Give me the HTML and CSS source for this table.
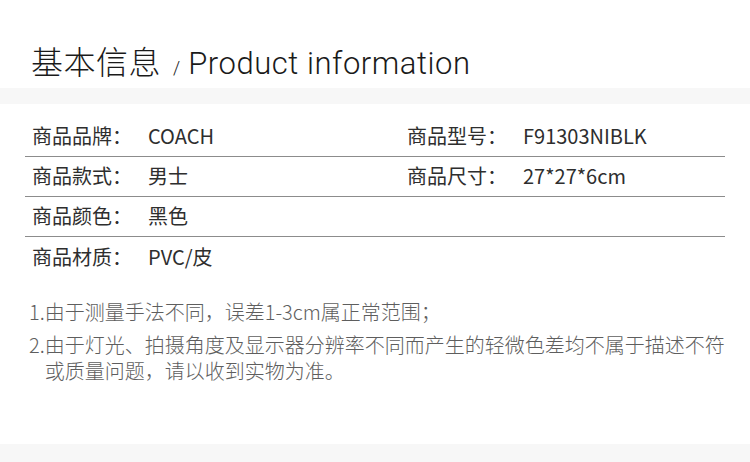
FILE: index.html
```html
<!DOCTYPE html>
<html lang="zh-CN">
<head>
<meta charset="utf-8">
<title>基本信息</title>
<link rel="stylesheet" href="styles.css">
</head>
<body>
<div class="page">
  <header class="header">
    <h1 class="title"><span class="title-cn">基本信息</span><span class="title-sep">/</span><span class="title-en">Product information</span></h1>
  </header>
  <div class="band"></div>
  <section class="specs">
    <div class="row">
      <div class="cell"><span class="label">商品品牌：</span><span class="value">COACH</span></div>
      <div class="cell"><span class="label">商品型号：</span><span class="value">F91303NIBLK</span></div>
    </div>
    <div class="row">
      <div class="cell"><span class="label">商品款式：</span><span class="value">男士</span></div>
      <div class="cell"><span class="label">商品尺寸：</span><span class="value">27*27*6cm</span></div>
    </div>
    <div class="row">
      <div class="cell"><span class="label">商品颜色：</span><span class="value">黑色</span></div>
      <div class="cell"></div>
    </div>
    <div class="row row-last">
      <div class="cell"><span class="label">商品材质：</span><span class="value">PVC/皮</span></div>
      <div class="cell"></div>
    </div>
  </section>
  <section class="notes">
    <p class="note"><span class="num">1.</span><span class="text">由于测量手法不同，误差1-3cm属正常范围；</span></p>
    <p class="note"><span class="num">2.</span><span class="text">由于灯光、拍摄角度及显示器分辨率不同而产生的轻微色差均不属于描述不符或质量问题，请以收到实物为准。</span></p>
  </section>
  <div class="band band-bottom"></div>
</div>
</body>
</html>
```

FILE: styles.css
```css
* {
  box-sizing: border-box;
}

html, body {
  margin: 0;
  padding: 0;
  background: #ffffff;
}

body {
  font-family: "Noto Sans CJK SC", "Noto Sans", sans-serif;
  color: #333333;
}

.page {
  width: 750px;
  min-height: 462px;
  display: flex;
  flex-direction: column;
}

.header {
  height: 88px;
  padding: 40px 0 0 31px;
}

.title {
  margin: 0;
  font-weight: 300;
  line-height: 40px;
  color: #1a1a1a;
  display: flex;
  align-items: baseline;
}

.title-cn {
  font-family: "Noto Sans CJK SC", sans-serif;
  font-size: 32px;
  font-weight: 300;
  letter-spacing: 0.5px;
}

.title-sep {
  font-family: "Roboto", sans-serif;
  font-size: 18px;
  font-weight: 300;
  margin: 0 8px 0 12px;
}

.title-en {
  font-family: "Roboto", sans-serif;
  font-size: 31px;
  font-weight: 300;
  letter-spacing: 0.55px;
}

.band {
  height: 16px;
  background: #f7f7f7;
}

.specs {
  margin: 13px 25px 0;
}

.row {
  display: grid;
  grid-template-columns: 375px 1fr;
  height: 40px;
  border-bottom: 1px solid #8c8c8c;
}

.row-last {
  border-bottom: none;
}

.cell {
  display: flex;
  align-items: center;
  padding: 0 0 2px 7px;
  font-size: 20px;
  line-height: 37px;
  color: #2e2e2e;
}

.label {
  width: 116px;
  flex: none;
}

.notes {
  padding: 22px 20px 0 29px;
}

.note {
  display: flex;
  margin: 0 0 7px;
  font-size: 20px;
  line-height: 26px;
  color: #5e5e5e;
  font-weight: 300;
}

.num {
  flex: none;
}

.band-bottom {
  margin-top: auto;
  height: 18px;
}
```
